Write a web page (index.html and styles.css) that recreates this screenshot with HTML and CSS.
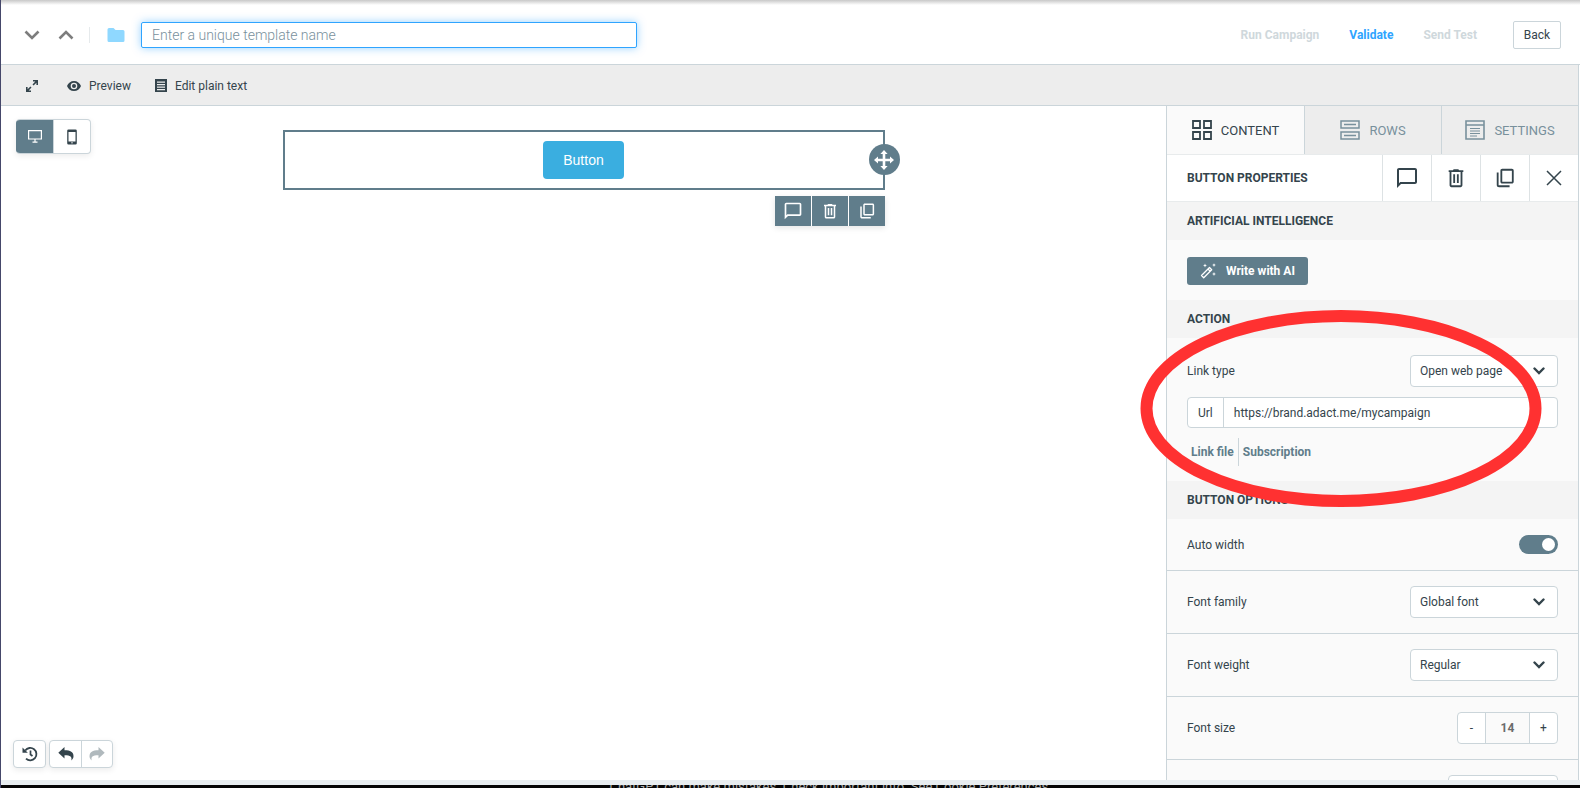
FILE: index.html
```
<!DOCTYPE html>
<html lang="en">

<head>
  <meta charset="UTF-8">
  <meta name="viewport" content="width=device-width, initial-scale=1.0">
  <title>Template editor</title>
  <link rel="stylesheet" href="styles.css">
</head>

<body>
  <!-- shared icons -->
  <svg class="sprite" aria-hidden="true">
    <symbol id="comment" viewBox="0 0 24 24">
      <path d="M20 2H4c-1.100 0-2 .9-2 2v18l4-4h14c1.100 0 2-.9 2-2V4c0-1.100-.9-2-2-2zm0 14H5.200L4 17.200V4h16v12z" />
    </symbol>
    <symbol id="trash" viewBox="0 0 24 24">
      <path d="M15.500 3.500 14.500 2.500h-5l-1 1H4v2h1V20c0 1.100.9 2 2 2h10c1.100 0 2-.9 2-2V5.500h1v-2h-4.500zM17 20H7V5.500h10V20zM9 8h2v9.500H9V8zm4 0h2v9.500h-2V8z" />
    </symbol>
    <symbol id="copy" viewBox="0 0 24 24">
      <path d="M19.500 2H9c-1.100 0-2 .9-2 2v12c0 1.100.9 2 2 2h10.500c1.100 0 2-.9 2-2V4c0-1.100-.9-2-2-2zm0 14H9V4h10.500v12zM3 6v13.500C3 20.900 4.100 22 5.500 22H17v-2H5V6z" />
    </symbol>
    <symbol id="chevron" viewBox="0 0 12 8">
      <path d="M1.500 1.500 6 6l4.500-4.500" fill="none" stroke="currentColor" stroke-width="2.400" stroke-linecap="round" />
    </symbol>
  </svg>

  <header class="header">
    <button class="plain arrow" aria-label="Next"><svg width="16" height="10" viewBox="0 0 16 10"><path d="M1.500 1.500 8 8l6.500-6.500" fill="none" stroke="currentColor" stroke-width="2.600" /></svg></button>
    <button class="plain arrow" aria-label="Previous"><svg width="16" height="10" viewBox="0 0 16 10"><path d="M1.500 8.500 8 2l6.500 6.500" fill="none" stroke="currentColor" stroke-width="2.600" /></svg></button>
    <span class="split"></span>
    <button class="plain folder" aria-label="Folder"><svg width="18" height="14" viewBox="0 0 18 14"><path d="M2 0h4.500l2 2H16a1.500 1.500 0 0 1 1.500 1.500v9A1.500 1.500 0 0 1 16 14H2a1.500 1.500 0 0 1-1.500-1.500v-11A1.500 1.500 0 0 1 2 0z" fill="#8fd8ff" /></svg></button>
    <input class="name" type="text" aria-label="Template name" placeholder="Enter a unique template name">
    <nav class="actions">
      <button class="action" disabled>Run Campaign</button>
      <button class="action active">Validate</button>
      <button class="action" disabled>Send Test</button>
      <button class="back">Back</button>
    </nav>
  </header>

  <main class="editor">
    <div class="toolbar">
      <button class="plain" aria-label="Full screen"><svg width="12" height="12" viewBox="0 0 12 12"><path d="M7 0h5v5h-1.600V2.700L7.600 5.500 6.500 4.400l2.800-2.800H7zM5 12H0V7h1.600v2.300l2.800-2.800 1.100 1.100-2.800 2.800H5z" /></svg></button>
      <button class="plain tool preview"><svg width="14" height="10" viewBox="0 0 14 10"><path fill-rule="evenodd" d="M7 0C3.800 0 1.100 2 0 5c1.100 3 3.800 5 7 5s5.900-2 7-5c-1.100-3-3.800-5-7-5zm0 8.300a3.300 3.300 0 1 1 0-6.600 3.300 3.300 0 0 1 0 6.600zM7 3a2 2 0 1 0 0 4 2 2 0 0 0 0-4z" /></svg>Preview</button>
      <button class="plain tool"><svg width="12" height="13" viewBox="0 0 12 13"><path fill-rule="evenodd" d="M0 0h12v13H0zM2 2.500v1.200h8V2.500zM2 5v1.200h8V5zm0 2.500v1.200h8V7.500zM2 10v1.200h8V10z" /></svg>Edit plain text</button>
    </div>

    <div class="workspace">
      <section class="stage">
        <div class="group devices">
          <button class="selected" aria-label="Desktop"><svg width="14" height="13" viewBox="0 0 14 13"><path d="M.6.600h12.800v8.400H.6zM7 9v3M4.500 12.200h5" fill="none" stroke="currentColor" stroke-width="1.200" /></svg></button>
          <button aria-label="Mobile"><svg width="10" height="16" viewBox="0 0 10 16"><path fill-rule="evenodd" d="M1.500.5h7a1.300 1.300 0 0 1 1.300 1.300v12.400a1.300 1.300 0 0 1-1.300 1.300h-7a1.300 1.300 0 0 1-1.300-1.300V1.800A1.300 1.300 0 0 1 1.500.5zM1.500 3v9.500h7V3zM4 13.500v.8h2v-.8z" /></svg></button>
        </div>

        <div class="block">
          <button class="cta">Button</button>
          <span class="move"><svg width="20" height="20" viewBox="0 0 20 20"><path d="M10 0l3.600 4H11.300v4.700H16V6.400L20 10l-4 3.600v-2.300h-4.700V16h2.300L10 20l-3.600-4h2.300v-4.700H4v2.300L0 10l4-3.600v2.300h4.700V4H6.400z" /></svg></span>
          <div class="block-tools">
            <button aria-label="Comment"><svg width="20" height="20"><use href="#comment" /></svg></button>
            <button aria-label="Delete"><svg width="18" height="18"><use href="#trash" /></svg></button>
            <button aria-label="Duplicate"><svg width="18" height="18"><use href="#copy" /></svg></button>
          </div>
        </div>

        <div class="history">
          <div class="group">
            <button aria-label="History"><svg width="16" height="16" viewBox="0 0 16 16"><path d="M3.200 4.500A6.200 6.200 0 1 1 4 12.700" fill="none" stroke="currentColor" stroke-width="1.800" /><path d="M.5 1.500v5.300h5.300z" /><path d="M8.500 4.500V8.500l2 1.500" fill="none" stroke="currentColor" stroke-width="1.700" /></svg></button>
          </div>
          <div class="group">
            <button aria-label="Undo"><svg width="16" height="14" viewBox="0 0 16 14"><path d="M6.500 0v3.300c6 0 9 1.800 9 6 0 1.700-.8 3-2.200 4.200.8-3.400-.5-5.200-6.800-5.200v3.300L.3 5.800z" /></svg></button>
            <button class="off" aria-label="Redo" disabled><svg width="16" height="14" viewBox="0 0 16 14"><path d="M9.500 0v3.300c-6 0-9 1.800-9 6 0 1.700.8 3 2.200 4.200-.8-3.400.5-5.200 6.800-5.200v3.300l6.200-5.800z" /></svg></button>
          </div>
        </div>
      </section>

      <aside class="sidebar">
        <div class="panel">
          <nav class="tabs">
            <button class="current"><svg width="20" height="20" viewBox="0 0 20 20"><path d="M1 1h7v7H1zM12 1h7v7h-7zM1 12h7v7H1zM12 12h7v7h-7z" fill="none" stroke="currentColor" stroke-width="1.800" /></svg>CONTENT</button>
            <button><svg width="20" height="20" viewBox="0 0 20 20"><path d="M1 1h18v7H1zM1 12h18v7H1zM4 4.500h12M4 15.500h12" fill="none" stroke="currentColor" stroke-width="1.500" /></svg>ROWS</button>
            <button><svg width="20" height="20" viewBox="0 0 20 20"><path d="M1 1h18v18H1zM1 5h18" fill="none" stroke="currentColor" stroke-width="1.600" /><path d="M5 8.500h10M5 11h10M5 13.500h10M5 16h7" fill="none" stroke="currentColor" /></svg>SETTINGS</button>
          </nav>

          <div class="titlebar">
            <h2>BUTTON PROPERTIES</h2>
            <button aria-label="Comment"><svg width="24" height="24"><use href="#comment" /></svg></button>
            <button aria-label="Delete"><svg width="22" height="22"><use href="#trash" /></svg></button>
            <button aria-label="Duplicate"><svg width="22" height="22"><use href="#copy" /></svg></button>
            <button aria-label="Close"><svg width="16" height="16" viewBox="0 0 16 16"><path d="M1 1l14 14M15 1L1 15" fill="none" stroke="currentColor" stroke-width="1.500" /></svg></button>
          </div>

          <h3>ARTIFICIAL INTELLIGENCE</h3>
          <div class="ai">
            <button class="write"><svg width="16" height="16" viewBox="0 0 16 16"><path d="M1.500 12.500 9.500 4.500l2.200 2.200-8 8zM8 6l2.200 2.200" fill="none" stroke="currentColor" stroke-width="1.300" stroke-linejoin="round" /><path d="M5 .5l.6 1.400L7 2.500l-1.400.6L5 4.500l-.6-1.400L3 2.500l1.400-.6zM14 .2l.6 1.300 1.300.5-1.300.6L14 4l-.6-1.400-1.300-.6 1.300-.5zM14 9l.6 1.400 1.400.6-1.400.6L14 13l-.6-1.400L12 11l1.400-.6z" /></svg>Write with AI</button>
          </div>

          <h3>ACTION</h3>
          <div class="action-box">
            <div class="line">
              <label for="link-type">Link type</label>
              <span class="select">
                <select id="link-type">
                  <option>Open web page</option>
                </select>
                <svg width="12" height="8"><use href="#chevron" /></svg>
              </span>
            </div>
            <div class="url">
              <label for="url">Url</label>
              <input id="url" type="text" value="https://brand.adact.me/mycampaign">
            </div>
            <div class="links">
              <a href="#">Link file</a>
              <a href="#">Subscription</a>
            </div>
          </div>

          <h3>BUTTON OPTIONS</h3>
          <div class="row short">
            <label for="auto-width">Auto width</label>
            <input class="switch" id="auto-width" type="checkbox" checked>
          </div>
          <div class="row">
            <label for="font-family">Font family</label>
            <span class="select">
              <select id="font-family">
                <option>Global font</option>
              </select>
              <svg width="12" height="8"><use href="#chevron" /></svg>
            </span>
          </div>
          <div class="row">
            <label for="font-weight">Font weight</label>
            <span class="select">
              <select id="font-weight">
                <option>Regular</option>
              </select>
              <svg width="12" height="8"><use href="#chevron" /></svg>
            </span>
          </div>
          <div class="row">
            <label for="font-size">Font size</label>
            <span class="stepper">
              <button aria-label="Smaller">-</button>
              <input id="font-size" type="text" value="14">
              <button aria-label="Larger">+</button>
            </span>
          </div>
          <div class="row">
            <span></span>
            <input class="color" type="text" aria-label="Text color">
          </div>
        </div>

        <svg class="highlight" viewBox="0 0 402 197" aria-hidden="true">
          <ellipse cx="201" cy="98.500" rx="194.500" ry="92.500" />
        </svg>
      </aside>
    </div>
  </main>

  <footer class="footer">ChatGPT can make mistakes. Check important info. See Cookie Preferences.</footer>
</body>

</html>
```
FILE: styles.css
```
* {
  box-sizing: border-box;
}

body {
  display: flex;
  flex-direction: column;
  height: 100vh;
  margin: 0;
  overflow: hidden;
  border-left: 1px solid #45476a;
  background-color: #fff;
  color: #34444c;
  font-family: Roboto, sans-serif;
  font-size: 12px;
}

button,
input,
select {
  font: inherit;
  color: inherit;
}

button {
  display: flex;
  align-items: center;
  justify-content: center;
  padding: 0;
  border: 0;
  background: none;
  cursor: pointer;
}

svg {
  flex: none;
  fill: currentColor;
}

.sprite {
  position: absolute;
  width: 0;
  height: 0;
}

/* header */
.header {
  display: flex;
  align-items: center;
  height: 65px;
  padding: 5px 19px 0 23px;
  border-bottom: 1px solid #cbd5da;
  background: linear-gradient(#c8c8c8, #fff 5px);
}

.arrow {
  width: 16px;
  margin-right: 18px;
  color: #7d7d7d;
}

.split {
  width: 1px;
  height: 16px;
  margin-right: 17px;
  margin-left: -3px;
  background: #e6eaec;
}

.folder {
  margin-right: 16px;
}

.name {
  width: 496px;
  height: 26px;
  padding: 0 10px;
  border: 1px solid #2fa4ff;
  border-radius: 2px;
  outline: none;
  box-shadow: 0 0 8px rgba(47, 164, 255, 0.5);
  font-size: 14px;
  font-weight: 300;
}

.name::placeholder {
  color: #78909c;
}

.actions {
  display: flex;
  align-items: center;
  gap: 30px;
  margin-left: auto;
}

.action {
  color: #cfd8dc;
  font-weight: 700;
}

.action.active {
  color: #2fa4ff;
}

.back {
  width: 48px;
  height: 28px;
  margin-left: 6px;
  border: 1px solid #cbd5da;
  border-radius: 2px;
}

/* editor */
.editor {
  display: flex;
  flex: 1;
  flex-direction: column;
  min-height: 0;
  margin-right: 1px;
  border-right: 1px solid #cbd5da;
}

.toolbar {
  display: flex;
  flex: none;
  align-items: center;
  gap: 24px;
  height: 41px;
  padding-top: 1px;
  padding-left: 25px;
  border-bottom: 1px solid #cbd5da;
  background: #ededed;
}

.tool {
  gap: 8px;
}

.preview {
  margin-left: 5px;
}

.workspace {
  display: flex;
  flex: 1;
  min-height: 0;
}

.stage {
  position: relative;
  flex: 1;
  padding-top: 24px;
}

.group {
  display: flex;
  border: 1px solid #cbd5da;
  border-radius: 4px;
  background: #fff;
  box-shadow: 0 2px 6px rgba(0, 0, 0, 0.08);
}

.group button {
  width: 31px;
  height: 26px;
}

.group button + button {
  border-left: 1px solid #cbd5da;
}

.devices {
  position: absolute;
  top: 13px;
  left: 15px;
  overflow: hidden;
  border-left: 0;
}

.devices button {
  width: 37px;
  height: 33px;
}

.devices .selected {
  background: #607d8b;
  color: #fff;
}

.off {
  color: #b0b9bd;
}

.history {
  position: absolute;
  bottom: 12px;
  left: 12px;
  display: flex;
  gap: 3px;
}

.block {
  position: relative;
  display: flex;
  justify-content: center;
  width: 602px;
  margin: 0 auto;
  padding: 9px;
  border: 2px solid #607d8b;
}

.cta {
  height: 38px;
  padding: 0 20px;
  border-radius: 4px;
  background: #3aaee0;
  color: #fff;
  font-family: "Liberation Sans", Arial, sans-serif;
  font-size: 14px;
}

.move {
  position: absolute;
  top: 12px;
  right: -17px;
  display: flex;
  align-items: center;
  justify-content: center;
  width: 31px;
  height: 31px;
  border-radius: 50%;
  background: #607d8b;
  color: #fff;
}

.block-tools {
  position: absolute;
  top: 64px;
  right: -2px;
  display: flex;
  gap: 1px;
  box-shadow: 0 2px 6px rgba(0, 0, 0, 0.1);
}

.block-tools button {
  width: 36px;
  height: 30px;
  background: #607d8b;
  color: #fff;
}

/* sidebar */
.sidebar {
  position: relative;
  width: 412px;
  border-left: 1px solid #cbd5da;
}

.panel {
  height: 100%;
  overflow: hidden;
  background: #fafafa;
}

.tabs {
  display: grid;
  grid-template-columns: repeat(3, 1fr);
  height: 49px;
  border-bottom: 1px solid #e8ebec;
}

.tabs button {
  gap: 9px;
  border-left: 1px solid #cbd5da;
  background: #ededed;
  color: #78909c;
  font-size: 13px;
}

.tabs .current {
  border-left: 0;
  background: none;
  color: #34444c;
}

.titlebar {
  display: flex;
  height: 47px;
  border-bottom: 1px solid #e8ebec;
  background: #fff;
}

.titlebar button {
  width: 49px;
  border-left: 1px solid #dde2e4;
}

h2,
h3 {
  margin: 0;
  padding: 0 20px;
  font-size: 12px;
  font-weight: 700;
}

h2 {
  flex: 1;
  line-height: 46px;
}

h3 {
  background: #f4f4f4;
  line-height: 38px;
}

.ai {
  padding: 17px 20px 15px;
}

.write {
  gap: 10px;
  width: 121px;
  height: 28px;
  border-radius: 3px;
  background: #607d8b;
  color: #fff;
  font-weight: 700;
}

.action-box {
  padding: 17px 20px 15px;
}

.line,
.row {
  display: flex;
  align-items: center;
  justify-content: space-between;
}

.select {
  display: grid;
  align-items: center;
  width: 148px;
}

.select select,
.select svg {
  grid-area: 1 / 1;
}

.select svg {
  justify-self: end;
  margin-right: 13px;
  pointer-events: none;
}

select {
  appearance: none;
  width: 100%;
  height: 32px;
  padding: 0 9px;
  border: 1px solid #cbd5da;
  border-radius: 4px;
  background: #fff;
}

.url {
  display: flex;
  align-items: center;
  height: 31px;
  margin-top: 10px;
  border: 1px solid #cbd5da;
  border-radius: 4px;
  background: #fff;
}

.url label {
  padding: 0 10px;
}

.url input {
  flex: 1;
  height: 100%;
  padding: 0 10px;
  border: 0;
  border-left: 1px solid #cbd5da;
  background: none;
}

.links {
  display: flex;
  margin-top: 10px;
  line-height: 28px;
}

.links a {
  padding: 0 4px;
  color: #607d8b;
  font-weight: 700;
  text-decoration: none;
}

.links a + a {
  border-left: 1px solid #cbd5da;
}

.row {
  height: 63px;
  padding: 0 20px;
  border-bottom: 1px solid #cbd5da;
}

.row.short {
  height: 52px;
}

.switch {
  appearance: none;
  display: flex;
  align-items: center;
  justify-content: flex-end;
  width: 39px;
  height: 19px;
  margin: 0;
  padding: 3px;
  border-radius: 10px;
  background: #607d8b;
}

.switch::before {
  content: "";
  width: 13px;
  height: 13px;
  border-radius: 50%;
  background: #fff;
}

.stepper {
  display: flex;
  width: 101px;
  height: 32px;
  border: 1px solid #cbd5da;
  border-radius: 4px;
  background: #fff;
}

.stepper button {
  width: 27px;
}

.stepper input {
  flex: 1;
  min-width: 0;
  padding: 0;
  border: solid #cbd5da;
  border-width: 0 1px;
  background: #fafafa;
  color: #6b6b6b;
  font-weight: 700;
  text-align: center;
}

.color {
  width: 110px;
  height: 32px;
  border: 1px solid #cbd5da;
  border-radius: 4px;
  background: #fff;
}

/* red marker round the link settings */
.highlight {
  position: absolute;
  top: 204px;
  left: -27px;
  width: 402px;
  height: 197px;
  fill: none;
  stroke: #ff3131;
  stroke-width: 12px;
  pointer-events: none;
}

.footer {
  flex: none;
  height: 8px;
  overflow: hidden;
  border-top: 5px solid #e8edf0;
  padding-left: 80px;
  background: #050505;
  color: #aaa;
  font-size: 13px;
  line-height: 4px;
  text-align: center;
}
```
